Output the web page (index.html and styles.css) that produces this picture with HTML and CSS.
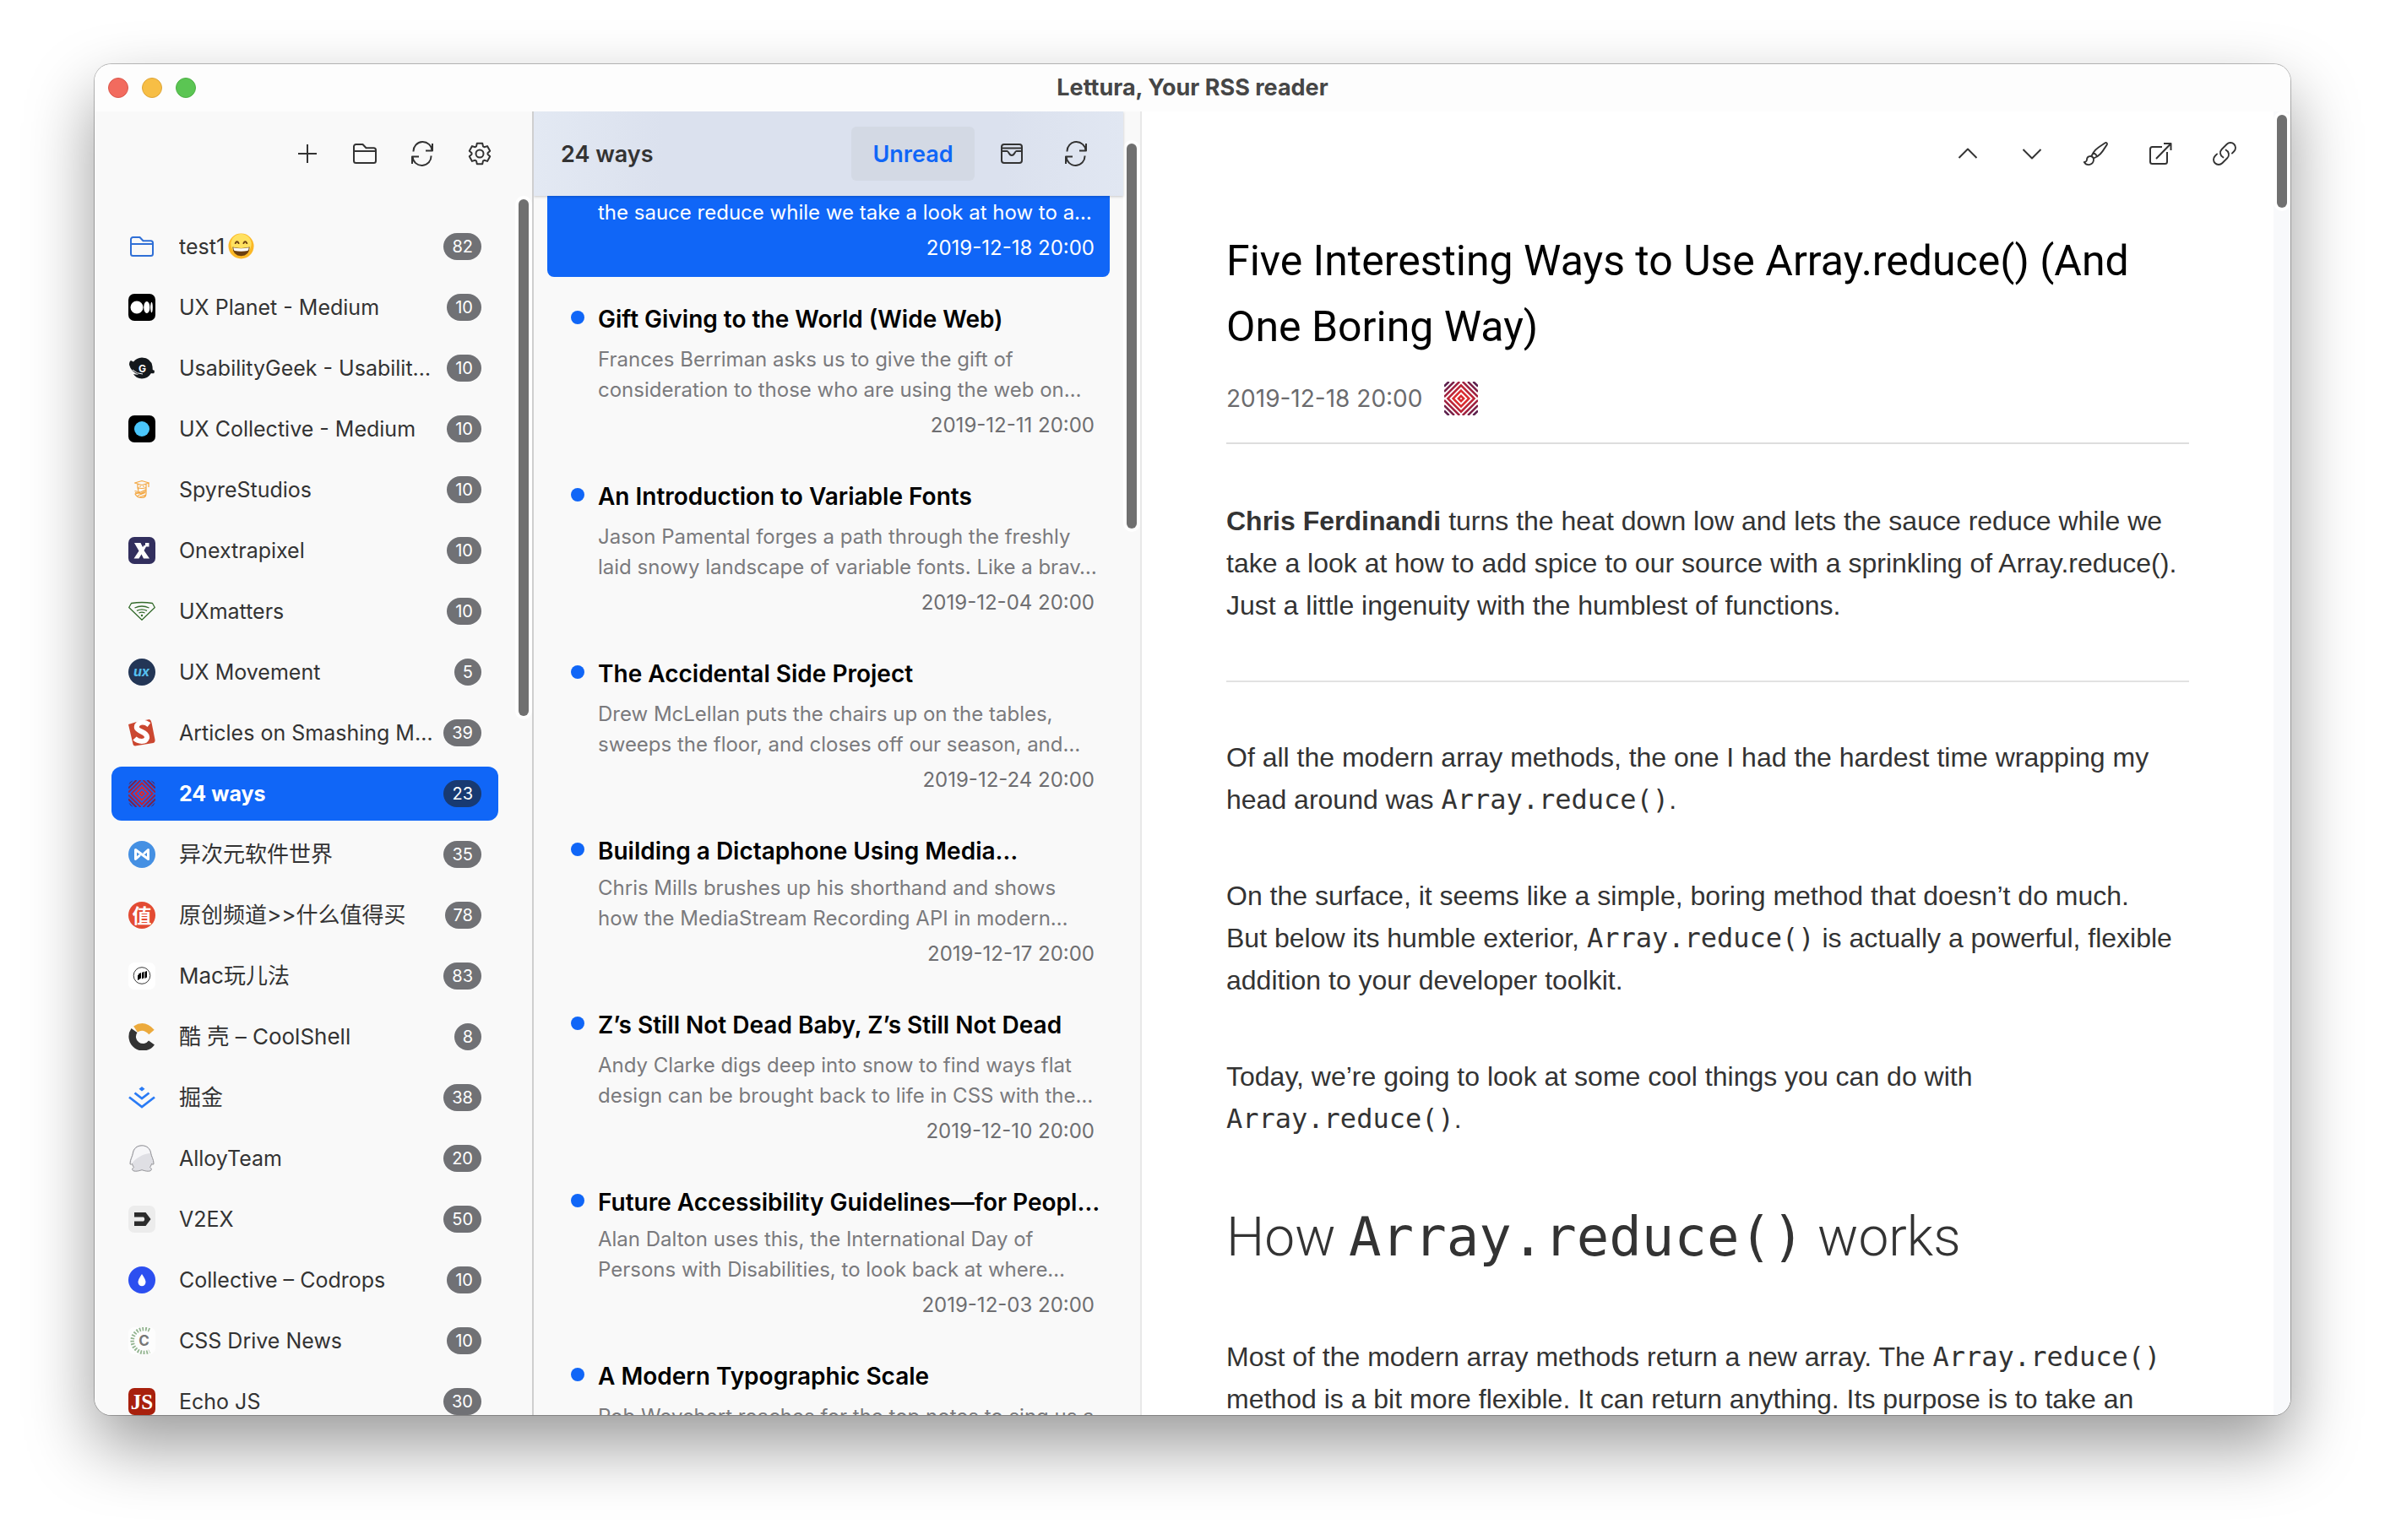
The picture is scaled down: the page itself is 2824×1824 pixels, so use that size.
FILE: index.html
```html
<!DOCTYPE html>
<html lang="en">
<head>
<meta charset="utf-8">
<title>Lettura, Your RSS reader</title>
<link rel="stylesheet" href="styles.css">
</head>
<body>
<svg class="sprite" aria-hidden="true">
  <symbol id="i-folder" viewBox="0 0 32 32"><path d="M3 13V7.500a2.500 2.500 0 0 1 2.500-2.500H13.500L17.500 9.200H26.500A2.500 2.500 0 0 1 29 11.700V24.500A2.500 2.500 0 0 1 26.500 27H5.500A2.500 2.500 0 0 1 3 24.500ZM3 13H29"/></symbol>
  <symbol id="i-refresh" viewBox="0 0 32 32"><path d="M5.500 13.500A11 11 0 0 1 27.500 12.500M28 4V12.500H20M26.500 18.500A11 11 0 0 1 4.500 19.500M4 28V19.500H12"/></symbol>
  <symbol id="i-weave" viewBox="0 0 32 32"><g fill="none" stroke-width="2"><path stroke="#d92b2f" d="M16 13.500l2.500 2.500-2.500 2.500-2.500-2.500zM16 8.500l7.500 7.500-7.500 7.500-7.500-7.500z"/><path stroke="#bb2437" d="M16 3.500L28.500 16 16 28.500 3.500 16z"/><path stroke="#a02240" d="M14.500 0L0 14.500M17.500 0L32 14.500M0 17.500L14.500 32M32 17.500L17.500 32"/><path stroke="#7c2148" d="M9.500 0L0 9.500M22.500 0L32 9.500M0 22.500L9.500 32M32 22.500L22.500 32"/><path stroke="#5c1f4c" d="M4.500 0L0 4.500M27.500 0L32 4.500M0 27.500L4.500 32M32 27.500L27.500 32"/></g></symbol>
</svg>

<div class="window">
  <header class="titlebar">
    <div class="lights">
      <button class="light light-close" aria-label="Close"></button>
      <button class="light light-min" aria-label="Minimize"></button>
      <button class="light light-max" aria-label="Zoom"></button>
    </div>
    <h1 class="app-title">Lettura, Your RSS reader</h1>
  </header>

  <div class="panes">
    <aside class="sidebar">
      <div class="sidebar-tools">
        <button class="tool" aria-label="Add feed"><svg class="icon" viewBox="0 0 32 32"><path d="M16 5V27M5 16H27"/></svg></button>
        <button class="tool" aria-label="New folder"><svg class="icon"><use href="#i-folder"/></svg></button>
        <button class="tool" aria-label="Refresh all"><svg class="icon"><use href="#i-refresh"/></svg></button>
        <button class="tool" aria-label="Settings"><svg class="icon" viewBox="0 0 32 32"><path d="M12 7.400L12.800 3.800H19.200L20 7.400 21.400 8.200 25 7.100 28.200 12.700 25.500 15.200V16.800L28.200 19.300 25 24.900 21.400 23.800 20 24.600 19.200 28.200H12.800L12 24.600 10.600 23.800 7 24.900 3.800 19.300 6.500 16.800V15.200L3.800 12.700 7 7.100 10.600 8.200Z"/><circle cx="16" cy="16" r="4.500"/></svg></button>
      </div>
      <div class="scroller">
        <nav class="feeds" aria-label="Feeds">
          <a class="feed" href="#"><svg class="fav line-blue"><use href="#i-folder"/></svg><span class="name">test1<svg class="emoji" viewBox="0 0 32 32" role="img" aria-label="grinning face"><circle cx="16" cy="16" r="15.500" fill="#fbb827"/><circle cx="16" cy="13.500" r="12.500" fill="#ffe160"/><path d="M9 12.500q2-4 4 0M19 12.500q2-4 4 0" fill="none" stroke="#6b3f10" stroke-width="2" stroke-linecap="round"/><path d="M5.500 17q10.500 3 21 0q-.5 11-10.500 11T5.500 17z" fill="#6b3f10"/><path d="M6.500 17.700q9.500 2.300 19 0q-.3 3.500-1.500 4q-8 1.500-16 0q-1.200-.5-1.500-4z" fill="#fff"/></svg></span><span class="badge">82</span></a>
          <a class="feed" href="#"><svg class="fav" viewBox="0 0 32 32"><rect width="32" height="32" rx="7"/><circle cx="10" cy="16" r="7.500" fill="#fff"/><ellipse cx="21.800" cy="16" rx="3.600" ry="7" fill="#fff"/><ellipse cx="27.500" cy="16" rx="1.300" ry="6.300" fill="#fff"/></svg><span class="name">UX Planet - Medium</span><span class="badge">10</span></a>
          <a class="feed" href="#"><svg class="fav" viewBox="0 0 32 32"><path fill="#14181c" d="M1 12q0-4 2-5l3 1.500Q9.500 4 16 3.500 27 4 28.500 14l.3 4 2.200 1-.5 3q-2 .5-3.500 0Q23 28.500 16 28.500 9 28 6 23q3 1 6 .8Q3 20 1 12z"/><path d="M5 18q5 5 12 5" fill="none" stroke="#f9f9f9" stroke-width="1"/><text x="16.500" y="20.500" class="fav-text" font-size="12" fill="#fff">G</text></svg><span class="name">UsabilityGeek - Usabilit…</span><span class="badge">10</span></a>
          <a class="feed" href="#"><svg class="fav" viewBox="0 0 32 32"><rect width="32" height="32" rx="7"/><circle cx="16" cy="16" r="9" fill="#4ac6fb"/></svg><span class="name">UX Collective - Medium</span><span class="badge">10</span></a>
          <a class="feed" href="#"><svg class="fav" viewBox="0 0 32 32"><g fill="none" stroke="#f3a640" stroke-width="1.200" stroke-linejoin="round"><path d="M7.500 8L16 5.500 24.500 8 16 10.500zM11 9.500v4q5 2 10 0v-4M24 8v5M11 13.500l1 4M21 13.500v7q0 5-5 5-6 0-8-4.500l6-1.500M7.500 17.500l7 1.500 6-3M8 19.500l7 1 6-3M11 23l9-3.500M13 25l8-3"/><path d="M13 12h2M17 12h2"/></g></svg><span class="name">SpyreStudios</span><span class="badge">10</span></a>
          <a class="feed" href="#"><svg class="fav" viewBox="0 0 32 32"><rect width="32" height="32" rx="7" fill="#322f5e"/><path fill="#fff" d="M7 7h7.500l2.500 5 2-2.500 2 2-2.500 4.500 6.500 9.500h-7l-2.500-5-3 5H6.500l6-9zM20 7h4.500v4.500H20z"/></svg><span class="name">Onextrapixel</span><span class="badge">10</span></a>
          <a class="feed" href="#"><svg class="fav" viewBox="0 0 32 32"><g fill="none" stroke="#356b2c" stroke-width="1.300" stroke-linejoin="round"><path d="M3.500 6.500Q16 4.500 28.500 6.500L31.300 11.500 16 26.300.7 11.500zM7.500 12q8.500-4 17 0M10 15.300q6-3 12 0M12.500 18q3.500-1.800 7 0"/></g><circle cx="16" cy="21" r="1.200" fill="#356b2c"/></svg><span class="name">UXmatters</span><span class="badge">10</span></a>
          <a class="feed" href="#"><svg class="fav" viewBox="0 0 32 32"><circle cx="16" cy="16" r="16" fill="#233656"/><text x="15.500" y="20.500" class="fav-text fav-italic" font-size="16" fill="#56c0f0">ux</text></svg><span class="name">UX Movement</span><span class="badge">5</span></a>
          <a class="feed" href="#"><svg class="fav" viewBox="0 0 32 32"><path fill="#cb4730" d="M0 6Q12 2 25 0q2 1 2.500 4l4 20q.5 3-2 4L8 31.500q-2 0-2.500-2z"/><path d="M24.500 6.500Q18 1.500 12 5 7.500 9 12 12.500C16 15.500 23 16.500 22 22 20.500 27.500 12 27 7.500 22.500" fill="none" stroke="#fff" stroke-width="6"/></svg><span class="name">Articles on Smashing M…</span><span class="badge">39</span></a>
          <a class="feed is-active" href="#" aria-current="page"><svg class="fav fav-round"><use href="#i-weave"/></svg><span class="name">24 ways</span><span class="badge">23</span></a>
          <a class="feed" href="#"><svg class="fav" viewBox="0 0 32 32"><circle cx="16" cy="16" r="16" fill="#4590e3"/><path d="M13 17.500L8.500 21.500V10.500L23.500 21.500V10.500L19 14.500" fill="none" stroke="#fff" stroke-width="3" stroke-linejoin="round" stroke-linecap="round"/></svg><span class="name" lang="zh">异次元软件世界</span><span class="badge">35</span></a>
          <a class="feed" href="#"><svg class="fav" viewBox="0 0 32 32"><circle cx="16" cy="16" r="16" fill="#e34b33"/><text x="16" y="24.500" class="fav-text" font-size="23" fill="#fff">值</text></svg><span class="name" lang="zh">原创频道&gt;&gt;什么值得买</span><span class="badge">78</span></a>
          <a class="feed" href="#"><svg class="fav" viewBox="0 0 32 32"><rect width="32" height="32" rx="7" fill="#fff"/><circle cx="16" cy="15.500" r="9.800" fill="none" stroke="#222" stroke-width=".9"/><path fill="#000" d="M12 13.500l3-1.500v6.500l-3 2zM16 12l2.500-1.300v7.500L16 19.500zM19.500 11l2.500-1v7.500l-2.500 1.500zM11 15l1 0v5.500l-1 .5z"/></svg><span class="name" lang="zh">Mac玩儿法</span><span class="badge">83</span></a>
          <a class="feed" href="#"><svg class="fav" viewBox="0 0 32 32"><g fill="none" stroke-width="8.500"><path stroke="#ecaa3c" d="M8.500 7Q18.500.5 27.500 10.500"/><path stroke="#333" d="M7 8.500A11.500 11.500 0 0 0 27.500 23"/></g></svg><span class="name" lang="zh">酷 壳 – CoolShell</span><span class="badge">8</span></a>
          <a class="feed" href="#"><svg class="fav" viewBox="0 0 32 32"><path d="M1 15.500L16 27 31 15.500M7.500 10.500L16 17l8.500-6.500" fill="none" stroke="#2a7bf5" stroke-width="2.800"/><path fill="#2a7bf5" d="M16 3l3.500 2.800L16 8.500l-3.500-2.700z"/></svg><span class="name" lang="zh">掘金</span><span class="badge">38</span></a>
          <a class="feed" href="#"><svg class="fav" viewBox="0 0 32 32"><path d="M16 .8c6 0 10 3.500 10.800 9.500.3 3 3.200 7 3.200 11.700 0 2-1.500 1-2.500.5-.5 2-1.500 3.500-2 4 2 1 3.500 4.500-2 4.700-3 0-5-.8-7.500-1.500-2.500.7-4.500 1.500-7.500 1.500-5.500-.2-4-3.700-2-4.700-.5-.5-1.500-2-2-4C3.500 23 2 24 2 22c0-4.700 2.900-8.700 3.200-11.700C6 4.300 10 .8 16 .8z" fill="#dfdfe4" stroke="#8f8f93" stroke-width="1"/><path d="M16 1.800c5 0 8.500 2.500 9.700 8C17 11 8 16 3.500 23c-1-4 2-9 2.700-12.500C7 4.800 11 1.800 16 1.800z" fill="#f6f6f8"/></svg><span class="name">AlloyTeam</span><span class="badge">20</span></a>
          <a class="feed" href="#"><svg class="fav" viewBox="0 0 32 32"><rect width="32" height="32" rx="7" fill="#ececec"/><path fill="#2b2b2b" d="M7 8h13.500l6 8-6 8H7v-5.500h11q2.500-2.500 0-5H7z"/></svg><span class="name">V2EX</span><span class="badge">50</span></a>
          <a class="feed" href="#"><svg class="fav" viewBox="0 0 32 32"><circle cx="16" cy="16" r="16" fill="#2c4ff0"/><path fill="#fff" d="M16 9q4.500 6.500 4.500 9.500a4.500 4.800 0 0 1-9 0Q11.500 15.500 16 9z"/></svg><span class="name">Collective – Codrops</span><span class="badge">10</span></a>
          <a class="feed" href="#"><svg class="fav" viewBox="0 0 32 32"><rect width="32" height="32" rx="7" fill="#fdfdfd"/><path d="M25 3.500A14 14 0 1 0 25 28.500" fill="none" stroke="#93b490" stroke-width="4.500" stroke-dasharray="1.800 1.700"/><text x="18.500" y="22" class="fav-text" font-size="17" fill="#777">C</text></svg><span class="name">CSS Drive News</span><span class="badge">10</span></a>
          <a class="feed" href="#"><svg class="fav" viewBox="0 0 32 32"><rect width="32" height="32" rx="7" fill="#a8200d"/><text x="16" y="25" class="fav-text fav-serif" font-size="25" fill="#fff">JS</text></svg><span class="name">Echo JS</span><span class="badge">30</span></a>
        </nav>
        <div class="track" aria-hidden="true"><div class="thumb" style="height:612px"></div></div>
      </div>
    </aside>

    <section class="articles">
      <div class="articles-main">
        <header class="articles-head">
          <h2 class="articles-title">24 ways</h2>
          <button class="filter">Unread</button>
          <button class="tool tool-wide" aria-label="Mark all read"><svg class="icon" viewBox="0 0 32 32"><rect x="4" y="5" width="24" height="22" rx="3"/><path d="M4 9.500H28M4 13H10.500C12.500 13 12.500 18 16 18S19.500 13 21.500 13H28"/></svg></button>
          <button class="tool tool-wide" aria-label="Refresh"><svg class="icon"><use href="#i-refresh"/></svg></button>
        </header>
        <ul class="list">
          <li class="item is-open"><p class="desc">the sauce reduce while we take a look at how to a…</p><time class="date">2019-12-18 20:00</time></li>
          <li class="item"><h3 class="item-title">Gift Giving to the World (Wide Web)</h3><p class="desc">Frances Berriman asks us to give the gift of<br>consideration to those who are using the web on…</p><time class="date">2019-12-11 20:00</time></li>
          <li class="item"><h3 class="item-title">An Introduction to Variable Fonts</h3><p class="desc">Jason Pamental forges a path through the freshly<br>laid snowy landscape of variable fonts. Like a brav…</p><time class="date">2019-12-04 20:00</time></li>
          <li class="item"><h3 class="item-title">The Accidental Side Project</h3><p class="desc">Drew McLellan puts the chairs up on the tables,<br>sweeps the floor, and closes off our season, and…</p><time class="date">2019-12-24 20:00</time></li>
          <li class="item"><h3 class="item-title is-clamped">Building a Dictaphone Using Media…</h3><p class="desc">Chris Mills brushes up his shorthand and shows<br>how the MediaStream Recording API in modern…</p><time class="date">2019-12-17 20:00</time></li>
          <li class="item"><h3 class="item-title">Z’s Still Not Dead Baby, Z’s Still Not Dead</h3><p class="desc">Andy Clarke digs deep into snow to find ways flat<br>design can be brought back to life in CSS with the…</p><time class="date">2019-12-10 20:00</time></li>
          <li class="item"><h3 class="item-title is-clamped">Future Accessibility Guidelines—for Peopl…</h3><p class="desc">Alan Dalton uses this, the International Day of<br>Persons with Disabilities, to look back at where…</p><time class="date">2019-12-03 20:00</time></li>
          <li class="item"><h3 class="item-title">A Modern Typographic Scale</h3><p class="desc">Rob Weychert reaches for the top notes to sing us a</p></li>
        </ul>
      </div>
      <div class="track track-articles" aria-hidden="true"><div class="thumb" style="height:456px"></div></div>
    </section>

    <main class="reader">
      <div class="reader-main">
        <div class="reader-tools">
          <button class="tool tool-wide" aria-label="Previous"><svg class="icon" viewBox="0 0 32 32"><path d="M5.500 21L16 10.500 26.500 21"/></svg></button>
          <button class="tool tool-wide" aria-label="Next"><svg class="icon" viewBox="0 0 32 32"><path d="M5.500 11L16 21.500 26.500 11"/></svg></button>
          <button class="tool tool-wide" aria-label="Style"><svg class="icon icon-24" viewBox="0 0 24 24"><path d="M9.530 16.122a3 3 0 00-5.780 1.128 2.250 2.250 0 01-2.400 2.245 4.500 4.500 0 008.400-2.245c0-.399-.078-.780-.220-1.128zm0 0a15.998 15.998 0 003.388-1.620m-5.043-.025a15.994 15.994 0 011.622-3.395m3.420 3.420a15.995 15.995 0 004.764-4.648l3.876-5.814a1.151 1.151 0 00-1.597-1.597L14.146 6.320a15.996 15.996 0 00-4.649 4.763m3.420 3.420a6.776 6.776 0 00-3.420-3.420"/></svg></button>
          <button class="tool tool-wide" aria-label="Open in browser"><svg class="icon" viewBox="0 0 32 32"><path d="M18 8H6.500A2.500 2.500 0 0 0 4 10.500V25.500A2.500 2.500 0 0 0 6.500 28H21.500A2.500 2.500 0 0 0 24 25.500V14M11 22L28.500 4M20 4H28.500V12"/></svg></button>
          <button class="tool tool-wide" aria-label="Copy link"><svg class="icon icon-24" viewBox="0 0 24 24"><path d="M13.190 8.688a4.500 4.500 0 011.242 7.244l-4.500 4.500a4.500 4.500 0 01-6.364-6.364l1.757-1.757m13.350-.622l1.757-1.757a4.500 4.500 0 00-6.364-6.364l-4.500 4.500a4.500 4.500 0 001.242 7.244"/></svg></button>
        </div>
        <article class="article">
          <header class="article-head">
            <h2 class="article-title">Five Interesting Ways to Use Array.reduce() (And<br>One Boring Way)</h2>
            <div class="meta"><time>2019-12-18 20:00</time><svg class="source" role="img" aria-label="24 ways"><use href="#i-weave"/></svg></div>
          </header>
          <div class="prose">
            <p class="lead"><strong>Chris Ferdinandi</strong> turns the heat down low and lets the sauce reduce while we take a look at how to add spice to our source with a sprinkling of Array.reduce(). Just a little ingenuity with the humblest of functions.</p>
            <hr>
            <p>Of all the modern array methods, the one I had the hardest time wrapping my head around was <code>Array.reduce()</code>.</p>
            <p>On the surface, it seems like a simple, boring method that doesn’t do much.<br>But below its humble exterior, <code>Array.reduce()</code> is actually a powerful, flexible addition to your developer toolkit.</p>
            <p>Today, we’re going to look at some cool things you can do with <code>Array.reduce()</code>.</p>
            <h2>How <code>Array.reduce()</code> works</h2>
            <p>Most of the modern array methods return a new array. The <code>Array.reduce()</code> method is a bit more flexible. It can return anything. Its purpose is to take an</p>
          </div>
        </article>
      </div>
      <div class="track track-reader" aria-hidden="true"><div class="thumb" style="height:110px"></div></div>
    </main>
  </div>
</div>
</body>
</html>
```

FILE: styles.css
```css
* { box-sizing: border-box; }

html, body { height: 100%; margin: 0; }

body {
  display: flex;
  padding: 76px 112px 148px;
  background: #fff;
  color: #333;
  font-family: Inter, "Noto Sans CJK SC", sans-serif;
  font-size: 25px;
}

h1, h2, h3, p, ul { margin: 0; padding: 0; font-weight: inherit; }

button { padding: 0; border: 0; background: none; color: inherit; font: inherit; }

.sprite { position: absolute; width: 0; height: 0; }

/* Window frame */
.window {
  flex: 1;
  min-width: 0;
  display: flex;
  flex-direction: column;
  overflow: hidden;
  border-radius: 20px;
  background: #fff;
  box-shadow: 0 0 0 1px rgba(0, 0, 0, .25), 0 36px 80px rgba(0, 0, 0, .4);
}

.titlebar {
  display: grid;
  grid-template-columns: 1fr auto 1fr;
  align-items: center;
  height: 56px;
  padding: 0 16px;
  background: #fdfdfd;
}

.lights { display: flex; gap: 16px; }
.light { width: 24px; height: 24px; border-radius: 50%; }
.light-close { background: #f26b5e; border: 1px solid #d9574b; }
.light-min { background: #f7be45; border: 1px solid #dda437; }
.light-max { background: #5bc553; border: 1px solid #4caf44; }

.app-title { color: #464646; font-size: 27px; font-weight: 700; line-height: 32px; }

.panes {
  flex: 1;
  min-height: 0;
  display: grid;
  grid-template-columns: 520px 720px minmax(0, 1fr);
}

/* Shared controls */
.tool { display: grid; place-items: center; width: 44px; height: 64px; }
.tool-wide { width: 64px; }

.icon {
  width: 32px;
  height: 32px;
  fill: none;
  stroke: #333;
  stroke-width: 2;
  stroke-linejoin: round;
}
.icon-24 { stroke-width: 1.4; stroke-linecap: round; }

.track { flex: none; width: 20px; padding: 4px; overflow: hidden; }
.thumb { border-radius: 6px; background: #707070; box-shadow: 0 0 0 4px #fff; }
.track-articles { padding-top: 38px; }
.track-reader { background: #f8f9fb; }

/* Feed sidebar */
.sidebar {
  display: flex;
  flex-direction: column;
  min-height: 0;
  background: #f9f9f9;
  border-right: 2px solid #cfcfcf;
}

.sidebar-tools {
  display: flex;
  justify-content: flex-end;
  align-items: center;
  gap: 24px;
  height: 100px;
  padding-right: 40px;
}

.scroller { flex: 1; min-height: 0; display: flex; overflow: hidden; }

.feeds {
  flex: 1;
  min-width: 0;
  display: flex;
  flex-direction: column;
  gap: 8px;
  padding: 28px 20px 0;
}

.feed {
  flex: none;
  display: flex;
  align-items: center;
  height: 64px;
  padding: 0 20px;
  border-radius: 12px;
  color: #333;
  text-decoration: none;
}
.feed.is-active { background: #1066f7; color: #fff; font-weight: 700; }

.fav { flex: none; width: 32px; height: 32px; margin-right: 28px; }
.fav-round { border-radius: 8px; }
.line-blue { fill: none; stroke: #2f6fd6; stroke-width: 2; stroke-linejoin: round; }
.fav-text { font-weight: 700; text-anchor: middle; }
.fav-italic { font-style: italic; }
.fav-serif { font-family: "Liberation Serif", serif; }

.name {
  flex: 1;
  min-width: 0;
  overflow: hidden;
  white-space: nowrap;
  text-overflow: ellipsis;
  line-height: 40px;
}
.name:lang(zh) { font-size: 26px; }
.emoji { width: 31px; height: 31px; margin-left: 4px; vertical-align: -6px; }

.badge {
  flex: none;
  min-width: 32px;
  padding: 0 10px;
  border-radius: 16px;
  background: #707175;
  color: #fff;
  font-size: 20px;
  font-weight: 400;
  line-height: 32px;
  text-align: center;
}
.is-active .badge { background: #183a72; }

/* Article list */
.articles {
  display: flex;
  min-height: 0;
  overflow: hidden;
  background: #f9f9f9;
  border-right: 2px solid #e8e8e8;
}
.articles-main { flex: 1; min-width: 0; }

.articles-head {
  position: relative;
  display: flex;
  align-items: center;
  gap: 12px;
  height: 100px;
  padding: 0 24px 0 32px;
  background: linear-gradient(90deg, #e3e9f3, #dbe1ee 22%, #dbe1ee 80%, #e1e7f2);
  box-shadow: 0 1px 3px rgba(0, 0, 0, .2);
}
.articles-title { flex: 1; font-size: 27px; font-weight: 600; }
.filter {
  width: 146px;
  height: 64px;
  border-radius: 6px;
  background: #d3d9e4;
  color: #1066f7;
  font-size: 27px;
  font-weight: 600;
}

.list { display: flex; flex-direction: column; gap: 16px; padding: 0 16px; list-style: none; }

.item { flex: none; padding: 16px 18px 16px 60px; border-radius: 8px; }

.item-title {
  position: relative;
  margin-bottom: 12px;
  color: #000;
  font-size: 28px;
  font-weight: 600;
  line-height: 36px;
  white-space: nowrap;
}
.item-title.is-clamped { margin-bottom: 8px; }
.item-title::before {
  content: "";
  position: absolute;
  top: 8px;
  left: -32px;
  width: 16px;
  height: 16px;
  border-radius: 50%;
  background: #1066f7;
}

.desc { color: #7a7a7d; font-size: 24px; line-height: 36px; white-space: nowrap; }
.date {
  display: block;
  margin-top: 6px;
  color: #6e6e71;
  font-size: 24px;
  line-height: 36px;
  text-align: right;
}

.is-open { padding-top: 2px; border-radius: 0 0 8px 8px; background: #1066f7; }
.is-open .desc, .is-open .date { color: #fff; }

/* Reading pane */
.reader { display: flex; min-width: 0; min-height: 0; overflow: hidden; background: #fff; }
.reader-main { flex: 1; min-width: 0; }

.reader-tools {
  display: flex;
  justify-content: flex-end;
  align-items: center;
  gap: 12px;
  height: 100px;
  padding-right: 26px;
}

.article { padding: 38px 100px 0; }
.article-head { padding-bottom: 32px; border-bottom: 2px solid #ddd; }
.article-title { color: #000; font-family: Roboto, sans-serif; font-size: 50px; line-height: 78px; }

.meta { display: flex; align-items: center; gap: 26px; margin-top: 26px; color: #6b6b6e; font-size: 28px; }
.source { width: 40px; height: 40px; }

.prose {
  padding-top: 66px;
  font-family: "Liberation Sans", Arial, sans-serif;
  font-size: 32px;
  line-height: 50px;
}
.prose p { margin-bottom: 64px; }
.prose hr { margin: 0 0 64px; border: 0; border-top: 2px solid #e2e2e2; }
.prose h2 { margin-bottom: 64px; font-family: Roboto, sans-serif; font-size: 64px; font-weight: 300; line-height: 104px; }
.prose code { font-family: "DejaVu Sans Mono", monospace; font-size: 1em; line-height: 1; font-weight: 400; }
```
